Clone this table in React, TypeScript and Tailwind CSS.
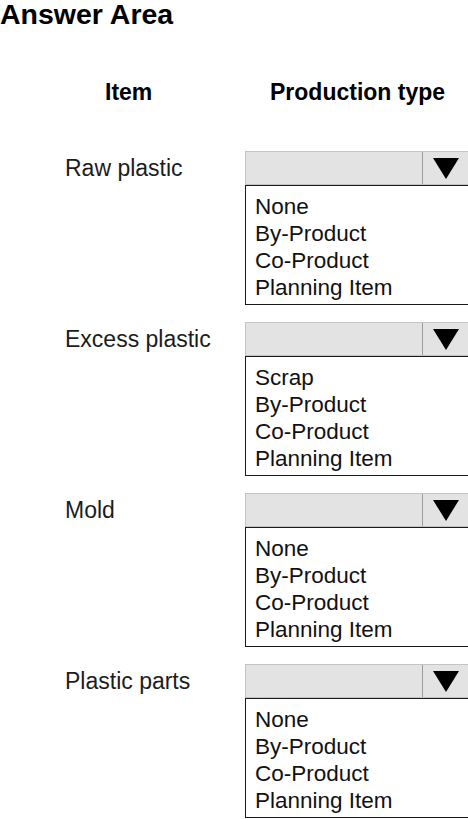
const rows = [
  { item: "Raw plastic", options: ["None", "By-Product", "Co-Product", "Planning Item"] },
  { item: "Excess plastic", options: ["Scrap", "By-Product", "Co-Product", "Planning Item"] },
  { item: "Mold", options: ["None", "By-Product", "Co-Product", "Planning Item"] },
  { item: "Plastic parts", options: ["None", "By-Product", "Co-Product", "Planning Item"] },
];

const Dropdown = ({ options }: { options: string[] }) => (
  <div className="w-[228px] shrink-0">
    <div className="flex h-[34px] border border-[#c4c4c4] bg-[#e3e3e3]">
      <div className="w-[177px] border-r border-[#9c9c9c]" />
      <div className="flex w-[45px] items-center justify-center pt-[1px]">
        <svg width="26" height="21" viewBox="0 0 26 21">
          <polygon points="0,0 26,0 13,21" fill="#000" />
        </svg>
      </div>
    </div>
    <div className="h-[120px] border border-[#1a1a1a] pl-[9px] pt-[7px] text-[22.5px] leading-[27px] text-[#111]">
      {options.map((o) => (
        <div key={o}>{o}</div>
      ))}
    </div>
  </div>
);

export default function App() {
  return (
    <div
      className="relative h-[819px] w-[468px] overflow-hidden bg-white text-black"
      style={{ fontFamily: '"Liberation Sans", Arial, sans-serif' }}
    >
      <h1 className="text-[28.5px] font-bold leading-none">Answer Area</h1>
      <div className="mt-[52px] flex text-[23px] font-bold leading-none">
        <div className="w-[270px] pl-[105px]">Item</div>
        <div>Production type</div>
      </div>
      <div className="mt-[47px] flex flex-col gap-[17px]">
        {rows.map((r) => (
          <div key={r.item} className="flex">
            <div className="w-[245px] shrink-0 pl-[65px] pt-[6px] text-[23px] leading-none text-[#1c1c1c]">
              {r.item}
            </div>
            <Dropdown options={r.options} />
          </div>
        ))}
      </div>
    </div>
  );
}
